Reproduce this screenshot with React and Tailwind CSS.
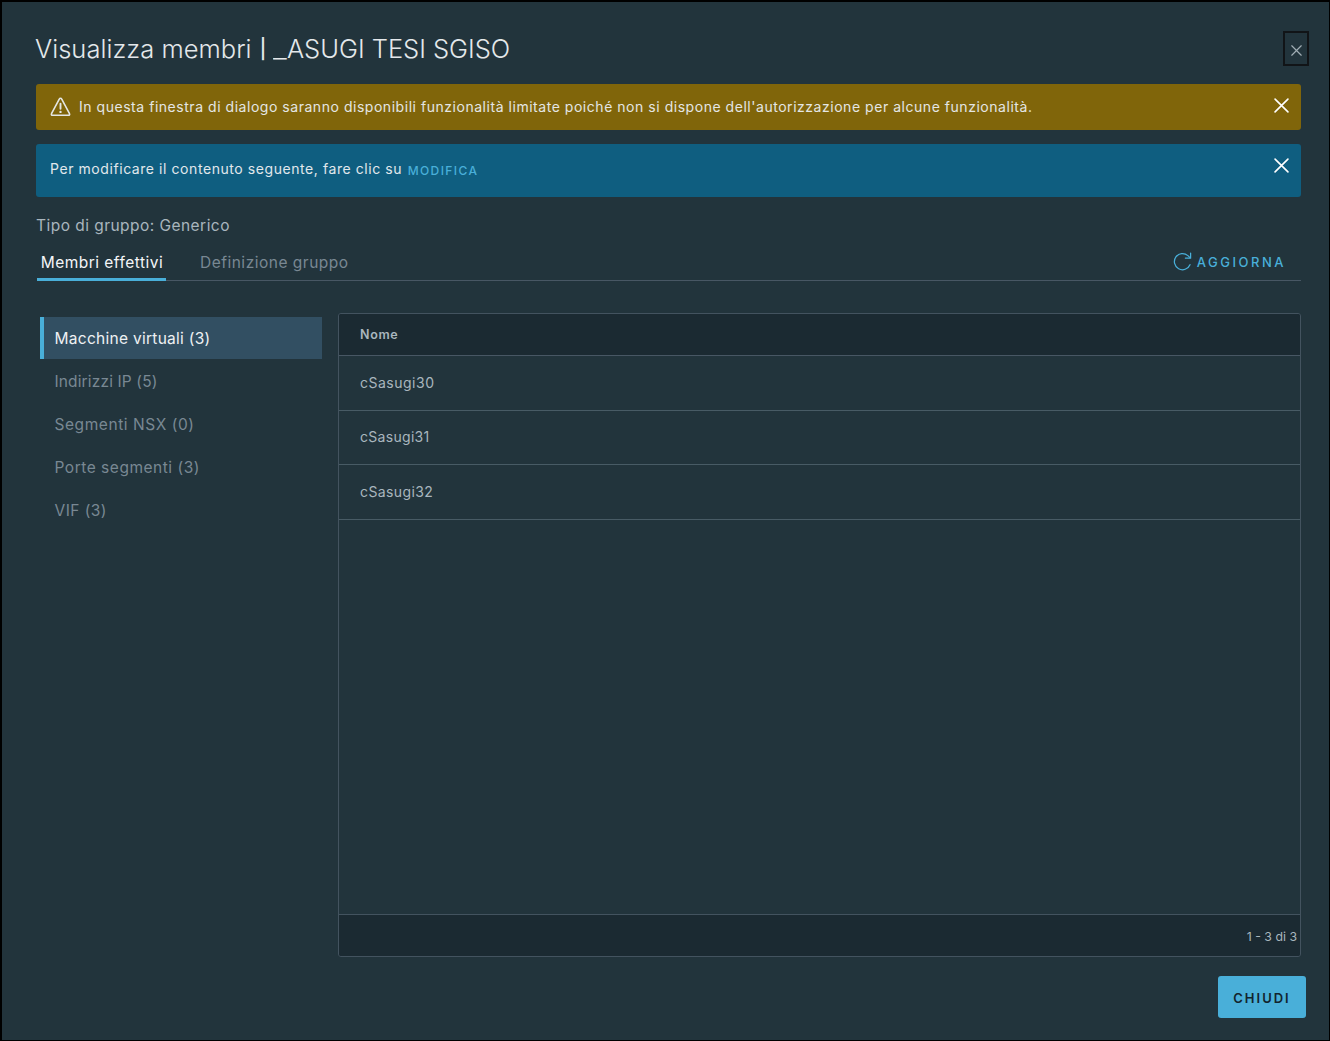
const Cross = ({ className }) => (
  <svg className={className} viewBox="0 0 14 14" fill="none" stroke="currentColor" strokeLinecap="round">
    <path d="M1 1l12 12M13 1L1 13" strokeWidth="1.5" />
  </svg>
);

const WarningIcon = () => (
  <svg className="h-5 w-[21px] shrink-0" viewBox="0 0 21 20" fill="none" stroke="currentColor" strokeWidth="1.6" strokeLinejoin="round" strokeLinecap="round">
    <path d="M9.4 1.9a1.2 1.2 0 0 1 2.2 0l7.9 14.8a1.05 1.05 0 0 1-.9 1.6H2.4a1.05 1.05 0 0 1-.9-1.6z" />
    <path d="M10.5 6.8v5" strokeWidth="1.9" />
    <circle cx="10.5" cy="14.9" r="1.2" fill="currentColor" stroke="none" />
  </svg>
);

const RefreshIcon = () => (
  <svg className="h-[19px] w-[19px] shrink-0" viewBox="0 0 19 19" fill="none" stroke="currentColor" strokeWidth="1.25" strokeLinecap="round" strokeLinejoin="round">
    <path d="M17 12.7A8.1 8.1 0 1 1 14.9 3.6L17 5.6" />
    <path d="M17.6 1v5.2h-5.2" />
  </svg>
);

const groups = [
  ["Indirizzi IP (5)", "tracking-[0.14px]"],
  ["Segmenti NSX (0)", "tracking-[0.57px]"],
  ["Porte segmenti (3)", "tracking-[0.52px]"],
  ["VIF (3)", "tracking-[0.45px]"],
];

const machines = [
  ["cSasugi30", "tracking-[0.5px]"],
  ["cSasugi31", "tracking-[0.3px]"],
  ["cSasugi32", "tracking-[0.4px]"],
];

export default function App() {
  return (
    <div className="h-[1041px] w-[1330px] overflow-hidden bg-black pt-0.5 pr-px pb-px pl-0.5 font-['Inter',sans-serif] text-[#a9b6be]">
      <div className="flex h-full flex-col bg-[#22343c] pr-[23px] pl-[34px]">
        <header className="flex h-[82px] shrink-0 items-start justify-between">
          <h1 className="ml-[-1px] pt-[29px] text-[25.5px] leading-9 font-light tracking-[0.03px] whitespace-nowrap text-[#e4e8eb]">
            Visualizza membri <span className="inline-block origin-[50%_54%] scale-y-[.76] font-normal">|</span>{" "}
            <span className="mr-[2.5px] ml-[-1.5px] inline-block origin-left scale-x-[1.2]">_</span>
            <span className="tracking-[-0.02px]">ASUGI TESI SGISO</span>
          </h1>
          <button className="mt-[29px] mr-[-3px] flex h-[35px] w-[26px] items-center justify-center border-2 border-[#111417] pt-1 text-[#a0adb4]">
            <Cross className="h-[11px] w-[11px]" />
          </button>
        </header>

        <div className="mr-[5px] flex h-[46px] shrink-0 items-start rounded-[3px] bg-[#80650a] pl-3.5 text-[#e4e6e4]">
          <div className="mt-[13px]"><WarningIcon /></div>
          <p className="mt-[13px] ml-2 flex-1 text-[14px] leading-5 tracking-[0.535px] whitespace-nowrap">In questa finestra di dialogo saranno disponibili funzionalità limitate poiché non si dispone dell'autorizzazione per alcune funzionalità.</p>
          <Cross className="mt-3.5 mr-3 h-[15px] w-[15px] text-white" />
        </div>

        <div className="mt-3.5 mr-[5px] flex h-[53px] shrink-0 items-start rounded-[3px] bg-[#0f5e80] pl-3.5 text-[#e1e8ec]">
          <p className="mt-[15px] text-[14px] leading-5 tracking-[0.57px] whitespace-nowrap">Per modificare il contenuto seguente, fare clic su</p>
          <a className="mt-[17px] ml-[5.5px] flex-1 text-[12px] leading-5 font-medium tracking-[1.4px] text-[#49afd9]">MODIFICA</a>
          <Cross className="mt-3.5 mr-3 h-[15px] w-[15px] text-white" />
        </div>

        <p className="mt-[18px] h-5 shrink-0 text-[15.5px] leading-[21px] tracking-[0.46px] whitespace-nowrap">Tipo di gruppo: Generico</p>

        <nav className="mt-2 mr-[5px] ml-px flex h-[38px] shrink-0 items-stretch border-b border-[#485764] text-[15.5px] leading-5">
          <a className="relative z-10 mb-[-1px] h-[38px] w-[129px] border-b-3 border-[#49afd9] pt-[10px] pl-[3.7px] tracking-[0.48px] whitespace-nowrap text-[#f4f6f8]">Membri effettivi</a>
          <a className="ml-[34px] pt-[10px] tracking-[0.5px] whitespace-nowrap text-[#798893]">Definizione gruppo</a>
          <a className="ml-auto flex pt-[9px] pr-[15px] text-[13px] font-medium tracking-[2.5px] text-[#49afd9]">
            <span className="mr-[5px]"><RefreshIcon /></span>AGGIORNA
          </a>
        </nav>

        <main className="mt-[31.5px] mr-[5px] flex h-[644px] shrink-0">
          <ul className="mt-[4.5px] ml-1 w-[282px] text-[15.5px] leading-[21px] text-[#798893]">
            <li className="h-[42px] border-l-4 border-[#49afd9] bg-[#324f62] pt-[11px] pl-[10.5px] tracking-[0.28px] text-[#eef1f3]">Macchine virtuali (3)</li>
            {groups.map(([label, tracking]) => (
              <li key={label} className="h-[43px] pt-[12px] pl-[14.5px]"><span className={tracking}>{label}</span></li>
            ))}
          </ul>
          <section className="ml-4 flex flex-1 flex-col overflow-hidden rounded-[3px] border border-[#43535f]">
            <div className="h-[42.5px] shrink-0 border-b border-[#485764] bg-[#1b2a32] pt-[11px] pl-[21px] text-[12.5px] leading-5 font-semibold tracking-[0.65px]">Nome</div>
            {machines.map(([name, tracking]) => (
              <div key={name} className="h-[54.5px] shrink-0 border-b border-[#485b65] pt-[16.5px] pl-[21px] text-[14px] leading-5"><span className={tracking}>{name}</span></div>
            ))}
            <div className="mt-auto h-[42px] border-t border-[#43535f] bg-[#1b2a32] pt-[12px] pr-[3px] text-right text-[12.3px] leading-5">1 - 3 di 3</div>
          </section>
        </main>

        <button className="mt-[19.5px] mr-[0.5px] h-[42px] w-[88px] shrink-0 self-end rounded-[3px] bg-[#49afd9] pt-[3px] pl-px text-[13px] font-semibold tracking-[2px] text-[#12242e]">CHIUDI</button>
      </div>
    </div>
  );
}
